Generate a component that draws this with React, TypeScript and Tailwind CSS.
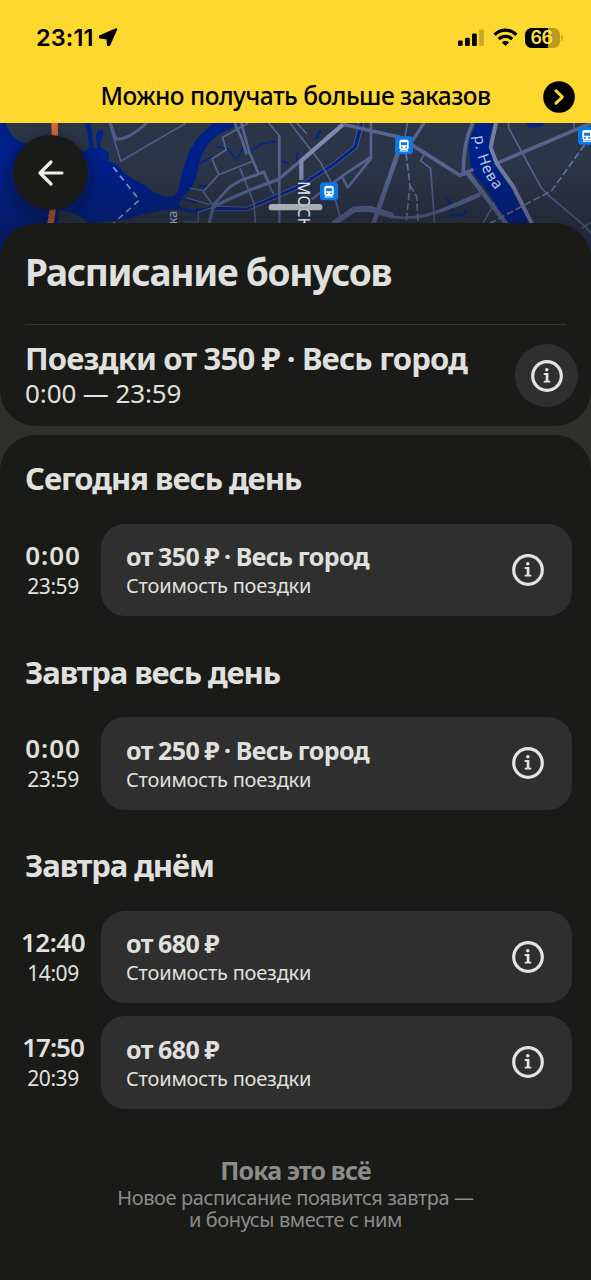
import React from 'react';
import { clsx } from 'clsx';

type Slot = {
    from: string;
    to: string;
    title: string;
    spacing: string;
};

type Group = {
    name: string;
    tracking: string;
    slots: Slot[];
};

const groups: Group[] = [
    {
        name: 'Сегодня весь день',
        tracking: 'tracking-[-1.05px]',
        slots: [{ from: '0:00', to: '23:59', title: 'от 350 ₽ · Весь город', spacing: 'tracking-[0.9px]' }],
    },
    {
        name: 'Завтра весь день',
        tracking: 'tracking-[-1.1px]',
        slots: [{ from: '0:00', to: '23:59', title: 'от 250 ₽ · Весь город', spacing: 'tracking-[0.9px]' }],
    },
    {
        name: 'Завтра днём',
        tracking: 'tracking-[-1.1px]',
        slots: [
            { from: '12:40', to: '14:09', title: 'от 680 ₽', spacing: 'tracking-[-0.5px]' },
            { from: '17:50', to: '20:39', title: 'от 680 ₽', spacing: 'tracking-[-1px]' },
        ],
    },
];

function InfoIcon() {
    return (
        <svg width="32" height="32" viewBox="0 0 32 32" fill="none" className="shrink-0">
            <circle cx="16" cy="16" r="14.3" stroke="#e3e3e1" strokeWidth="3.2" />
            <circle cx="15.8" cy="9.8" r="1.8" fill="#e3e3e1" />
            <path d="M12.7 13.1h4.7v7.6h1.9v1.8h-6.6v-1.8h2v-5.7h-2z" fill="#e3e3e1" />
        </svg>
    );
}

function StatusBar() {
    return (
        <div className="flex h-[75px] items-center justify-between pl-[36px] pr-[28px]">
            <div className="flex items-center gap-[5px]">
                <span className="font-['Inter'] text-[23.5px] font-semibold leading-[30px] tracking-[0.1px]">23:11</span>
                <svg width="20" height="19" viewBox="0 0 20 19">
                    <path d="M18.4 1.2 11.4 17 9.8 17.2 9.4 10.6 1.8 9.6 2 8.2z" fill="#000" stroke="#000" strokeWidth="1.8" strokeLinejoin="round" />
                </svg>
            </div>
            <div className="flex items-center">
                <svg width="26" height="18" viewBox="0 0 26 18">
                    <rect x="0" y="11.5" width="4.6" height="5.5" rx="1.3" />
                    <rect x="7" y="8.7" width="4.8" height="8.3" rx="1.3" />
                    <rect x="14" y="4.5" width="4.8" height="12.5" rx="1.3" />
                    <rect x="21.1" y="0.5" width="4.8" height="16.5" rx="1.3" fill="#c9aa25" />
                </svg>
                <svg width="25" height="19" viewBox="0 0 25 19" fill="none" className="ml-[9px]">
                    <path d="M1.6 6.8C7.6.6 17.4.6 23.4 6.8" stroke="#000" strokeWidth="3.3" />
                    <path d="M5.8 11.2c3.7-3.7 9.7-3.7 13.4 0" stroke="#000" strokeWidth="3.2" />
                    <path d="M8.9 14.4c2-1.9 5.2-1.9 7.2 0l-3.6 3.7z" fill="#000" />
                </svg>
                <div className="ml-[7px] flex items-center gap-[1px]">
                    <div className="flex h-[20px] w-[35px] items-center justify-center rounded-[6.5px] bg-linear-to-r from-black from-66% to-[#ba9c20] to-66% pr-[2px] font-['Inter'] text-[18px] font-semibold leading-none tracking-[-0.6px] text-[#fde14a]">
                        66
                    </div>
                    <div className="h-[6px] w-[2px] rounded-r-full bg-[#c9aa25]" />
                </div>
            </div>
        </div>
    );
}

function Banner() {
    return (
        <div className="grid h-[48px] grid-cols-[1fr_auto_1fr] items-center px-4 pb-[5px]">
            <div />
            <div className="whitespace-nowrap pb-[2px] text-[24.5px] font-medium leading-[34px] tracking-[-0.5px]">
                Можно получать больше заказов
            </div>
            <svg width="32" height="32" viewBox="0 0 32 32" fill="none" className="justify-self-end">
                <circle cx="16" cy="16" r="15.8" fill="#000" />
                <path d="m13 9.8 6.4 6.2-6.4 6.2" stroke="#fdd92f" strokeWidth="3" strokeLinecap="round" strokeLinejoin="round" />
            </svg>
        </div>
    );
}

function TrainPin({ x, y }: { x: number; y: number }) {
    return (
        <g transform={`translate(${x} ${y})`}>
            <rect width="54" height="54" rx="11" fill="#0c78e8" />
            <path fillRule="evenodd" d="M19 10h16q6 0 6 6v19q0 5-6 6h-16q-6-1-6-6v-19q0-6 6-6zM18 18h18v9h-18zM18 31h5v5h-5zM31 31h5v5h-5z" fill="#fff" />
            <path d="m19 40-4 6M35 40l4 6M18 44h18" stroke="#fff" strokeWidth="3" />
        </g>
    );
}

// City map, three units per pixel
function CityMap() {
    return (
        <svg width="591" height="140" viewBox="0 9 1773 420" fill="none" className="block">
            <defs>
                <linearGradient id="shade" x1="0" y1="0" x2="0" y2="1">
                    <stop offset="0.3" stopColor="#10131c" stopOpacity="0" />
                    <stop offset="0.75" stopColor="#10131c" stopOpacity="0.35" />
                </linearGradient>
                <filter id="soft" x="-50%" y="-50%" width="200%" height="200%">
                    <feGaussianBlur stdDeviation="20" />
                </filter>
                <path id="neva" d="M1423 48Q1428 104 1446 146 1462 184 1510 240" />
            </defs>
            <rect y="9" width="1773" height="420" fill="#2a3547" />

            {/* water */}
            <g fill="#00208a">
                <path d="M0 9H18Q26 50 68 68L255 92 270 84 256 9H272L282 86 292 84 288 50Q290 32 302 28 314 34 308 46L298 80 328 98 324 122 354 134 376 164 416 186 440 198 456 214 496 230 516 230 534 216 548 150 570 90 596 50 640 9H722Q690 26 670 36 632 54 612 92 598 120 592 160 582 208 546 232L536 252 545 266 500 270 440 280Q390 300 340 303L262 312V429H0Z" />
                <path d="M1430 9H1480L1466 62 1482 130 1530 200 1595 320H1530L1460 210 1412 150 1406 66Z" />
                <path d="M1578 9h54l-4 10-40 4z" />
            </g>
            <path d="M175 272Q235 274 264 310H175Z" fill="#2a3547" />
            <g stroke="#06258a" strokeWidth="5">
                <path d="M538 264L570 274 640 266 740 266 900 198 1000 134 1066 82 1084 9" strokeWidth="10" />
                <path d="M592 196l34 4M600 130l40-22M650 80l34 8 24 28M712 118l14-30 30 4M756 92l26-20 46-8M846 124l20 6M888 124l6-28M545 236l50 12" />
                <path d="M962 30l-16 28M1340 235l20 36M1352 285l40 0 8-18" strokeWidth="8" />
            </g>

            {/* streets */}
            <g stroke="#56648f" strokeLinejoin="round">
                <path d="M328 9L362 124 558 9" stroke="#4d5c8a" strokeWidth="5" />
                <path d="M330 9L348 58Q388 58 440 9" stroke="#4d5c8a" strokeWidth="9" />
                <path d="M568 204l40 8M560 234l70 20M640 262l-45 14v30h-44" strokeWidth="3.5" />
                <path d="M704 9l20 44 16 50M724 9l24 88 28 64" strokeWidth="8" />
                <path d="M745 9L668 52 678 90 636 116 656 164 610 215 640 258M656 164L762 122" strokeWidth="5" />
                <path d="M640 255L690 200 720 182 792 156 808 192M640 258L628 310" strokeWidth="9" />
                <path d="M640 260L700 232 750 210 836 178 900 124" strokeWidth="10" />
                <path d="M720 145L762 250 766 312M790 156l30 66M806 9l32 38" strokeWidth="5" />
                <path d="M838 46V312" strokeWidth="8" />
                <path d="M870 9L960 125 990 180 1020 290M890 9l30 32" strokeWidth="5" />
                <path d="M640 258L740 262 900 192 998 128 1060 78 1077 9M645 272L742 272 902 204 1004 138 1072 84 1092 9" strokeWidth="2.5" />
                <path d="M1113 9V115L1043 203 1025 169M1111 112L1028 167 935 238" strokeWidth="8" />
                <path d="M1000 312L1062 268 1110 266 1180 288" strokeWidth="18" />
                <path d="M1173 290Q1250 302 1330 268L1445 218M1240 294Q1320 282 1440 226" strokeWidth="8" />
                <path d="M1195 95L1120 312" strokeWidth="14" />
                <path d="M1025 12L1200 52 1380 166 1420 148" strokeWidth="11" />
                <path d="M1272 9L1232 70" strokeWidth="10" />
                <path d="M1222 9l-8 50M1274 100l-12 22 30 24 12 166" strokeWidth="5" />
                <path d="M1418 9Q1388 70 1390 168" strokeWidth="11" />
                <path d="M1400 156L1450 220 1522 316" strokeWidth="14" />
                <path d="M1490 130L1773 10" strokeWidth="11" />
                <path d="M1526 9v15l98 180 20 20 110 94 20 24M1722 9v20M1484 248l-34 60M1745 325l28-18" strokeWidth="5" />
            </g>
            <path d="M1754 74L1655 212 1573 255 1470 310M1218 100L1230 196 1218 308M1230 196L1250 230 1254 308" stroke="#69749c" strokeWidth="5" strokeDasharray="22 8" />
            <path d="M1488 9L1472 82 1490 130 1540 200 1597 314" stroke="#747fa5" strokeWidth="12" strokeLinejoin="round" />
            <path d="M904 180V122L1028 14" stroke="#7f89b0" strokeWidth="13" />
            <path d="M340 142l78 98-80 72" stroke="#8ba0d8" strokeWidth="5" strokeDasharray="18 14" />
            <path d="M164 9v20q10 160-14 290" stroke="#d86a3c" strokeWidth="19" />

            <rect y="9" width="1773" height="420" fill="url(#shade)" />
            <circle cx="151" cy="170" r="120" fill="#101010" opacity="0.4" filter="url(#soft)" />

            {/* labels */}
            <g fontFamily="Noto Sans, sans-serif" fill="#b9c4dc">
                <text transform="translate(895 184) rotate(90)" fontSize="46" letterSpacing="1" fill="#e3e6ee">МОСК</text>
                <text transform="translate(530 272) rotate(-90)" textAnchor="end" fontSize="38" fill="#8d99b8">ка</text>
                <text fontSize="45" letterSpacing="3">
                    <textPath href="#neva">р. Нева</textPath>
                </text>
            </g>
            <TrainPin x={960} y={187} />
            <TrainPin x={1185} y={49} />
            <TrainPin x={1734} y={20} />
            <rect x="806" y="252" width="161" height="19" rx="9.5" fill="#b5b7bb" opacity="0.92" />
        </svg>
    );
}

function SlotRow({ slot }: { slot: Slot }) {
    return (
        <div className="flex h-[92.5px] items-stretch">
            <div className="flex w-[80px] flex-col items-center pt-[14px]">
                <div className={clsx('text-[26px] font-semibold leading-[34px]', slot.spacing)}>{slot.from}</div>
                <div className="text-[21px] leading-[28px] tracking-[-0.4px]">{slot.to}</div>
            </div>
            <div className="ml-[8px] flex w-[471px] items-center justify-between rounded-[24px] bg-[#2f2f2f] pl-[25px] pr-[28px]">
                <div className="whitespace-nowrap">
                    <div className="text-[25px] font-bold leading-[32px] tracking-[-0.6px] [word-spacing:-0.6px]">{slot.title}</div>
                    <div className="text-[20px] leading-[27px] tracking-[-0.2px]">Стоимость поездки</div>
                </div>
                <InfoIcon />
            </div>
        </div>
    );
}

export default function App() {
    return (
        <div className="h-[1280px] w-[591px] overflow-hidden bg-[#2f2f2e] font-['Noto_Sans',sans-serif] text-[#e0e0de]">
            <header className="h-[123px] bg-[#fdd92f] text-black">
                <StatusBar />
                <Banner />
            </header>

            <div className="relative">
                <CityMap />
                <button className="absolute left-[13px] top-[12px] flex size-[75px] items-center justify-center rounded-full bg-[#1a1a18]">
                    <svg width="28" height="28" viewBox="0 0 28 28" fill="none" stroke="#ececea" strokeWidth="3.2" strokeLinecap="round" strokeLinejoin="round">
                        <path d="M25 14H3M14 3 3 14l11 11" />
                    </svg>
                </button>
            </div>

            {/* Current bonus */}
            <section className="relative -mt-[40px] h-[203px] rounded-[36px] bg-[#1a1a18] pl-[25px]">
                <div className="mr-[25px] h-[102px] border-b border-[#353534] pt-[24px]">
                    <h1 className="whitespace-nowrap text-[37px] font-bold leading-[50px] tracking-[-1.25px]">Расписание бонусов</h1>
                </div>
                <div className="flex items-start justify-between pr-[13px] pt-[14px]">
                    <div className="whitespace-nowrap">
                        <div className="text-[31px] font-bold leading-[39px] tracking-[-0.8px]">Поездки от 350 ₽ · Весь город</div>
                        <div className="text-[26px] leading-[31px] tracking-[-0.1px]">0:00 — 23:59</div>
                    </div>
                    <button className="mt-[5px] flex size-[63px] items-center justify-center rounded-full bg-[#2f2f2f]">
                        <InfoIcon />
                    </button>
                </div>
            </section>

            {/* Upcoming slots */}
            <section className="mt-[9px] h-[845px] rounded-t-[36px] bg-[#1a1a18] pl-[13px] pt-[21px]">
                {groups.map((group, i) => (
                    <div key={group.name} className={clsx(i > 0 && 'mt-[33.5px]')}>
                        <h2 className={clsx('mb-[23.5px] ml-[12px] text-[31px] font-bold leading-[44px]', group.tracking)}>{group.name}</h2>
                        <div className="flex flex-col gap-[13px]">
                            {group.slots.map((slot) => (
                                <SlotRow key={slot.from} slot={slot} />
                            ))}
                        </div>
                    </div>
                ))}
                <div className="mt-[44.5px] pr-[13px] text-center text-[#8c8c8a]">
                    <div className="text-[25px] font-bold leading-[34px] tracking-[-0.85px]">Пока это всё</div>
                    <p className="text-[20px] leading-[21.5px] tracking-[-0.4px]">
                        Новое расписание появится завтра —
                        <br />и бонусы вместе с ним
                    </p>
                </div>
            </section>
        </div>
    );
}
